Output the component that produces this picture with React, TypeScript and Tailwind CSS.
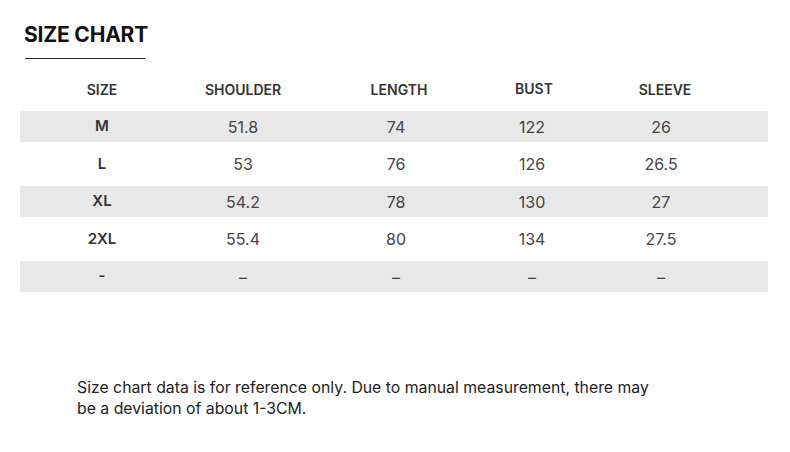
import React from 'react';

type Row = { size: string; shoulder: string; length: string; bust: string; sleeve: string; shaded: boolean };

const rows: Row[] = [
  { size: 'M', shoulder: '51.8', length: '74', bust: '122', sleeve: '26', shaded: true },
  { size: 'L', shoulder: '53', length: '76', bust: '126', sleeve: '26.5', shaded: false },
  { size: 'XL', shoulder: '54.2', length: '78', bust: '130', sleeve: '27', shaded: true },
  { size: '2XL', shoulder: '55.4', length: '80', bust: '134', sleeve: '27.5', shaded: false },
  { size: '-', shoulder: '–', length: '–', bust: '–', sleeve: '–', shaded: true },
];

// column widths tuned so each column's centre lines up with the chart
const cols = 'grid grid-cols-[164px_118px_188px_84px_174px_20px]';

export default function App() {
  return (
    <div className="w-[790px] h-[452px] bg-white font-['Inter',sans-serif] text-[#333]">
      {/* Title */}
      <div className="pt-[22px] pl-6">
        <h1 className="text-[21px] font-bold leading-[26px] text-[#111] tracking-[-0.2px]">SIZE CHART</h1>
        <div className="mt-[10px] ml-px w-[120px] h-px bg-[#222]" />
      </div>

      {/* Table */}
      <div className="ml-5 w-[748px] mt-[7px]">
        <div className={`${cols} h-[45px] items-center text-[14px] font-semibold text-[#333] pt-[1px]`}>
          <div className="text-center">SIZE</div>
          <div className="text-center">SHOULDER</div>
          <div className="text-center pl-[6px]">LENGTH</div>
          <div className="text-center pl-[4px] -mt-[2px]">BUST</div>
          <div className="text-center pl-[8px]">SLEEVE</div>
          <div />
        </div>

        {rows.map((r, i) => (
          <div
            key={i}
            className={`${cols} items-center text-[16px] text-[#444] ${r.shaded ? 'h-[31px] bg-[#e8e8e8]' : 'h-[44px]'}`}
          >
            <div className="text-center text-[15px] font-semibold text-[#333]">{r.size}</div>
            <div className="text-center">{r.shoulder}</div>
            <div className="text-center">{r.length}</div>
            <div className="text-center">{r.bust}</div>
            <div className="text-center">{r.sleeve}</div>
            <div />
          </div>
        ))}
      </div>

      {/* Note */}
      <p className="mt-[85px] ml-[77px] w-[620px] text-[15.8px] leading-[21px] text-[#222]">
        Size chart data is for reference only. Due to manual measurement, there may
        <br />
        be a deviation of about 1-3CM.
      </p>
    </div>
  );
}
